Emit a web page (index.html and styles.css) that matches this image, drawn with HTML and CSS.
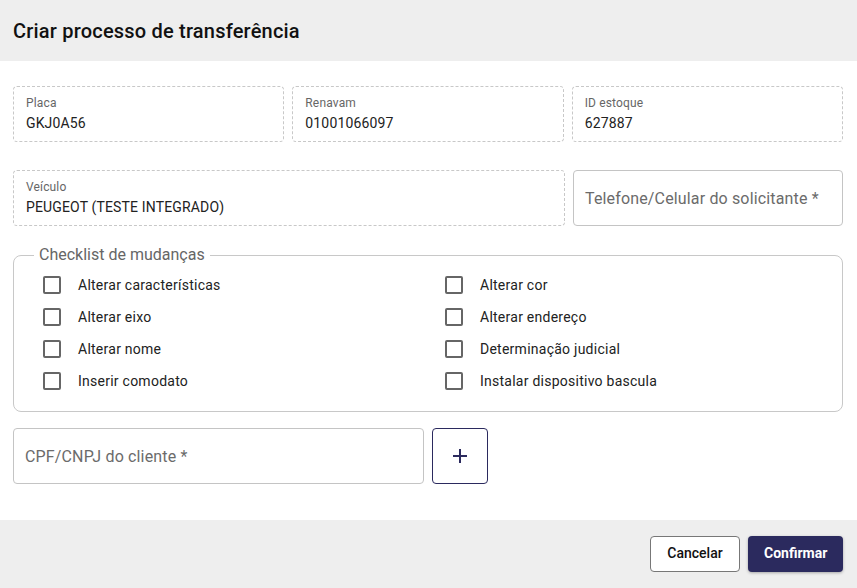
FILE: index.html
```html
<!DOCTYPE html>
<html lang="pt-BR">
<head>
<meta charset="utf-8">
<title>Criar processo de transferência</title>
<link rel="stylesheet" href="styles.css">
</head>
<body>
<div class="dialog">
  <header class="dialog-header">
    <h2 class="dialog-title">Criar processo de transferência</h2>
  </header>
  <main class="dialog-body">
    <div class="row row-3">
      <div class="field field-disabled">
        <span class="field-label">Placa</span>
        <span class="field-value">GKJ0A56</span>
      </div>
      <div class="field field-disabled">
        <span class="field-label">Renavam</span>
        <span class="field-value">01001066097</span>
      </div>
      <div class="field field-disabled">
        <span class="field-label">ID estoque</span>
        <span class="field-value">627887</span>
      </div>
    </div>
    <div class="row row-2">
      <div class="field field-disabled">
        <span class="field-label">Veículo</span>
        <span class="field-value">PEUGEOT (TESTE INTEGRADO)</span>
      </div>
      <div class="field field-input">
        <span class="field-placeholder">Telefone/Celular do solicitante *</span>
      </div>
    </div>
    <fieldset class="checklist">
      <legend class="checklist-legend">Checklist de mudanças</legend>
      <div class="checklist-grid">
        <label class="check"><span class="check-box"></span><span class="check-text">Alterar características</span></label>
        <label class="check"><span class="check-box"></span><span class="check-text">Alterar cor</span></label>
        <label class="check"><span class="check-box"></span><span class="check-text">Alterar eixo</span></label>
        <label class="check"><span class="check-box"></span><span class="check-text">Alterar endereço</span></label>
        <label class="check"><span class="check-box"></span><span class="check-text">Alterar nome</span></label>
        <label class="check"><span class="check-box"></span><span class="check-text">Determinação judicial</span></label>
        <label class="check"><span class="check-box"></span><span class="check-text">Inserir comodato</span></label>
        <label class="check"><span class="check-box"></span><span class="check-text">Instalar dispositivo bascula</span></label>
      </div>
    </fieldset>
    <div class="row row-cpf">
      <div class="field field-input field-cpf">
        <span class="field-placeholder">CPF/CNPJ do cliente *</span>
      </div>
      <button class="add-btn" type="button" aria-label="Adicionar">
        <svg width="16" height="16" viewBox="0 0 16 16"><path d="M8 1v14M1 8h14" stroke="#2b2a5e" stroke-width="2" fill="none"/></svg>
      </button>
    </div>
  </main>
  <footer class="dialog-footer">
    <button class="btn btn-outline" type="button">Cancelar</button>
    <button class="btn btn-primary" type="button">Confirmar</button>
  </footer>
</div>
</body>
</html>
```
FILE: styles.css
```css
* { box-sizing: border-box; }
html, body { margin: 0; padding: 0; }
body {
  font-family: Roboto, "Liberation Sans", Arial, sans-serif;
  background: #ffffff;
  color: #222;
  width: 857px;
  height: 588px;
  overflow: hidden;
}
.dialog {
  display: flex;
  flex-direction: column;
  height: 588px;
}
.dialog-header {
  background: #eeeeee;
  height: 61px;
  padding: 0 13px;
  display: flex;
  align-items: center;
}
.dialog-title {
  margin: 0;
  font-size: 20px;
  font-weight: 500;
  color: #111;
  letter-spacing: 0.2px;
}
.dialog-body {
  flex: 1;
  padding: 25px 14px 0 13px;
  display: flex;
  flex-direction: column;
}
.row {
  display: grid;
  gap: 8px;
}
.row-3 { grid-template-columns: 1fr 1fr 1fr; margin-bottom: 28px; }
.row-2 { grid-template-columns: 552px 1fr; margin-bottom: 20px; }
.row-cpf { grid-template-columns: 411px 56px; }
.field {
  height: 56px;
  border-radius: 4px;
  display: flex;
  flex-direction: column;
  justify-content: center;
  padding: 0 12px;
}
.field-disabled {
  border: 1px dashed #c8c8c8;
  padding-top: 1px;
}
.field-input {
  border: 1px solid #c4c4c4;
  padding-left: 11px;
}
.field-label {
  font-size: 12px;
  color: #666;
  line-height: 15px;
  letter-spacing: 0.15px;
}
.field-value {
  font-size: 14px;
  color: #222;
  line-height: 20px;
  margin-top: 2px;
  letter-spacing: 0.15px;
}
.field-placeholder {
  font-size: 16px;
  color: #6b6b6b;
  letter-spacing: 0.15px;
}
.checklist {
  margin: 0 0 16px 0;
  border: 1px solid #c8c8c8;
  border-radius: 8px;
  padding: 5px 0 14px 29px;
  min-width: 0;
}
.checklist-legend {
  font-size: 16px;
  color: #666;
  padding: 0 5px;
  margin-left: -9px;
  line-height: 18px;
}
.checklist-grid {
  display: grid;
  grid-template-columns: 402px 1fr;
  grid-auto-rows: 32px;
}
.check {
  display: flex;
  align-items: center;
  font-size: 14px;
  color: #222;
  letter-spacing: 0.25px;
}
.check-box {
  width: 18px;
  height: 18px;
  border: 2px solid #666;
  border-radius: 2px;
  margin-right: 17px;
  flex: none;
}
.add-btn {
  width: 56px;
  height: 56px;
  border: 1px solid #2b2a5e;
  border-radius: 4px;
  background: #fff;
  display: flex;
  align-items: center;
  justify-content: center;
  padding: 0;
}
.dialog-footer {
  background: #eeeeee;
  height: 68px;
  display: flex;
  justify-content: flex-end;
  align-items: center;
  gap: 8px;
  padding: 0 14px 0 0;
}
.btn {
  height: 36px;
  border-radius: 4px;
  font-family: Roboto, "Liberation Sans", Arial, sans-serif;
  font-size: 14px;
  font-weight: 500;
  padding: 0 16px 3px;
}
.btn-outline {
  width: 90px;
  background: #fff;
  color: #111;
  border: 1px solid #777;
}
.btn-primary {
  width: 95px;
  background: #2b2a5e;
  color: #fff;
  border: none;
  font-weight: 700;
  box-shadow: 0 1px 3px rgba(0,0,0,0.3);
}
```
